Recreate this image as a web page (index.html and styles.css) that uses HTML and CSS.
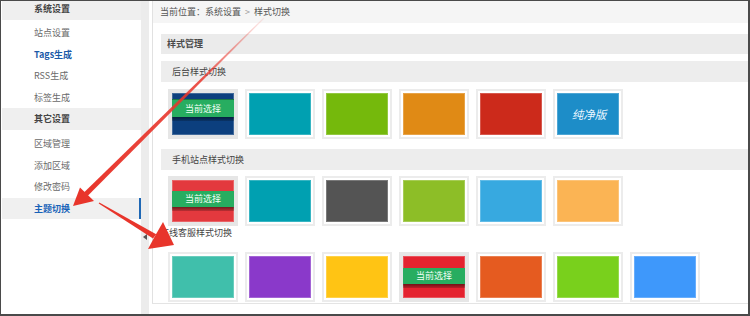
FILE: index.html
```html
<!DOCTYPE html>
<html lang="zh-CN">
<head>
<meta charset="utf-8">
<title>样式切换</title>
<link rel="stylesheet" href="styles.css">
</head>
<body>
<div class="frame">
  <aside class="sidebar">
    <div class="nav-head nav-head-top">系统设置</div>
    <ul class="nav-list">
      <li class="nav-item">站点设置</li>
      <li class="nav-item nav-item-em">Tags生成</li>
      <li class="nav-item">RSS生成</li>
      <li class="nav-item">标签生成</li>
    </ul>
    <div class="nav-head">其它设置</div>
    <ul class="nav-list">
      <li class="nav-item">区域管理</li>
      <li class="nav-item">添加区域</li>
      <li class="nav-item">修改密码</li>
      <li class="nav-item nav-item-active">主题切换</li>
    </ul>
  </aside>
  <div class="collapse"><span class="collapse-arrow"></span></div>
  <div class="spacer"></div>
  <main class="main">
    <div class="crumb">当前位置：系统设置 <span class="crumb-sep">&gt;</span> 样式切换</div>
    <div class="content">
      <div class="bar bar-title">样式管理</div>

      <div class="bar">后台样式切换</div>
      <div class="tiles tiles-first">
        <div class="tile tile-on"><div class="swatch c-navy"><span class="band band-hi">当前选择</span></div></div>
        <div class="tile"><div class="swatch c-teal"></div></div>
        <div class="tile"><div class="swatch c-green"></div></div>
        <div class="tile"><div class="swatch c-orange"></div></div>
        <div class="tile"><div class="swatch c-red"></div></div>
        <div class="tile"><div class="swatch c-blue"><span class="pure">纯净版</span></div></div>
      </div>

      <div class="bar">手机站点样式切换</div>
      <div class="tiles">
        <div class="tile tile-on"><div class="swatch c-red2"><span class="band">当前选择</span></div></div>
        <div class="tile"><div class="swatch c-teal"></div></div>
        <div class="tile"><div class="swatch c-gray"></div></div>
        <div class="tile"><div class="swatch c-lime"></div></div>
        <div class="tile"><div class="swatch c-sky"></div></div>
        <div class="tile"><div class="swatch c-peach"></div></div>
      </div>

      <div class="plain-head">在线客服样式切换</div>
      <div class="tiles">
        <div class="tile"><div class="swatch c-mint"></div></div>
        <div class="tile"><div class="swatch c-purple"></div></div>
        <div class="tile"><div class="swatch c-yellow"></div></div>
        <div class="tile tile-on"><div class="swatch c-red3"><span class="band band-lo">当前选择</span></div></div>
        <div class="tile"><div class="swatch c-flame"></div></div>
        <div class="tile"><div class="swatch c-grass"></div></div>
        <div class="tile"><div class="swatch c-azure"></div></div>
      </div>
    </div>
  </main>

  <svg class="annot" width="750" height="316" viewBox="0 0 750 316" aria-hidden="true">
    <defs>
      <linearGradient id="fade" gradientUnits="userSpaceOnUse" x1="264" y1="18" x2="86" y2="194">
        <stop offset="0" stop-color="#e8352b" stop-opacity="0.08"/>
        <stop offset="0.35" stop-color="#e8352b" stop-opacity="0.85"/>
        <stop offset="1" stop-color="#e8352b"/>
      </linearGradient>
    </defs>
    <polygon points="264.4,18.4 263.6,17.6 84.2,192.2 87.8,195.8" fill="url(#fade)"/>
    <polygon points="73,206 80,187.5 94,201" fill="#e8352b"/>
    <polygon points="99.3,202.6 98.7,203.4 153,238.5 156.2,234.2" fill="#e8352b"/>
    <polygon points="174,245 163,222 155,236 148,249" fill="#e8352b"/>
  </svg>
</div>
</body>
</html>
```

FILE: styles.css
```css
* {
  box-sizing: border-box;
}

html, body {
  margin: 0;
  padding: 0;
  background: #ffffff;
}

body {
  font-family: "Noto Sans CJK SC", "Microsoft YaHei", "Liberation Sans", sans-serif;
  font-size: 9px;
  color: #555;
}

.frame {
  position: relative;
  width: 750px;
  height: 316px;
  border-style: solid;
  border-color: #4a4a4a;
  border-width: 1px 2px 2px 1px;
  display: flex;
  overflow: hidden;
  background: #fff;
}

/* sidebar */
.sidebar {
  width: 140px;
  flex: none;
  padding-left: 1px;
  background: #fff;
}

.nav-head {
  height: 22px;
  line-height: 22px;
  padding-left: 32px;
  background: #efefef;
  color: #444;
  font-weight: bold;
}

.nav-head-top {
  height: 19px;
  line-height: 15px;
}

.nav-list {
  list-style: none;
  margin: 0;
  padding: 3px 0 0;
}

.nav-head-top + .nav-list {
  padding-top: 2px;
}

.nav-item {
  height: 21.5px;
  line-height: 21.5px;
  padding-left: 32px;
  color: #6a6a6a;
  margin-right: 1px;
}

.nav-item-em {
  color: #1b5aa8;
  font-weight: bold;
}

.nav-item-active {
  background: #f0f0f0;
  color: #1762b8;
  font-weight: bold;
  border-right: 2px solid #1f68b5;
  margin-right: 0;
}

/* collapse strip */
.collapse {
  width: 8px;
  flex: none;
  background: #ececec;
}

.collapse-arrow {
  display: block;
  width: 0;
  height: 0;
  margin: 233px 0 0 2px;
  border-right: 4px solid #555;
  border-top: 3px solid transparent;
  border-bottom: 3px solid transparent;
}

.spacer {
  width: 3px;
  flex: none;
}

/* main */
.main {
  flex: 1;
  height: 303px;
  border-left: 1px solid #e1e1e1;
  border-bottom: 1px solid #e4e4e4;
}

.crumb {
  height: 22px;
  line-height: 22px;
  padding-left: 7px;
  background: #f5f5f5;
  color: #555;
}

.crumb-sep {
  color: #999;
  padding: 0 2px;
}

.content {
  padding: 11px 0 0 8px;
}

.bar {
  height: 21px;
  line-height: 21px;
  padding-left: 11px;
  background: #ededed;
  color: #444;
}

.bar-title {
  height: 20px;
  line-height: 20px;
  padding-left: 6px;
  margin-bottom: 7px;
  background: #ebebeb;
  font-weight: bold;
  color: #4a4a4a;
}

.plain-head {
  height: 20px;
  line-height: 14px;
  margin-left: -1px;
  color: #444;
}

.tiles {
  display: flex;
  gap: 7px;
  padding-left: 7px;
  margin-top: 6px;
}

.tiles-first {
  margin-top: 7px;
  margin-bottom: 10px;
}

.tile {
  width: 70px;
  height: 50px;
  border: 2px solid #ececec;
  padding: 2px;
  background: #fff;
}

.tile-on {
  background: #e6e6e6;
  border-color: #e6e6e6;
}

.swatch {
  position: relative;
  width: 62px;
  height: 42px;
  box-shadow: inset 0 0 0 1px rgba(255, 255, 255, 0.22);
  overflow: hidden;
}

.band {
  position: absolute;
  left: 0;
  right: 0;
  top: 11px;
  height: 16px;
  line-height: 16px;
  text-align: center;
  color: #f2fff6;
  background: #27ad60;
}

.band::after {
  content: "";
  position: absolute;
  left: 0;
  right: 0;
  top: 100%;
  height: 4px;
  background: linear-gradient(rgba(0, 0, 0, 0.5), rgba(0, 0, 0, 0.18));
}

.band-hi {
  top: 6px;
  height: 18px;
  line-height: 17px;
  border-top: 1px solid rgba(0, 0, 0, 0.3);
}

.band-lo {
  top: 12px;
}

.pure {
  display: block;
  line-height: 42px;
  text-align: center;
  color: #eaf6ff;
  font-size: 11.5px;
  font-style: italic;
  padding-left: 2px;
}

.c-navy { background: #0c3f7e; }
.c-teal { background: #00a0b1; }
.c-green { background: #75b90c; }
.c-orange { background: #e08a15; }
.c-red { background: #cc2a1b; }
.c-blue { background: #1d8dc8; }

.c-red2 { background: #e3393e; }
.c-gray { background: #545454; }
.c-lime { background: #8dbe27; }
.c-sky { background: #37a9e0; }
.c-peach { background: #fbb454; }

.c-mint { background: #40bfab; }
.c-purple { background: #8a39ca; }
.c-yellow { background: #ffc414; }
.c-red3 { background: #e4222f; }
.c-flame { background: #e55b20; }
.c-grass { background: #79d01c; }
.c-azure { background: #3e98fb; }

/* annotation overlay (drawn over the page) */
.annot {
  position: absolute;
  left: -1px;
  top: -1px;
  pointer-events: none;
}
```
